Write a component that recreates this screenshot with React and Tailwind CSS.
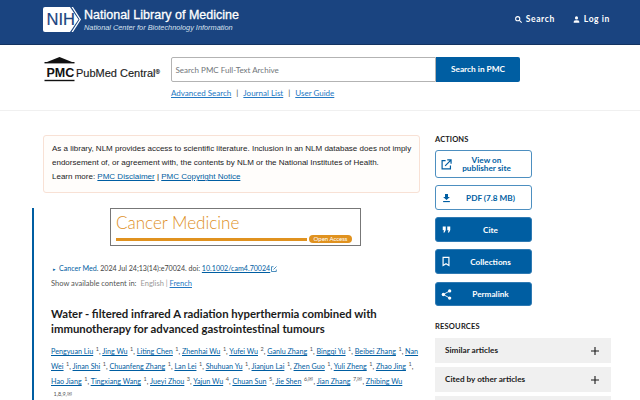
import React from "react";

const sans = "font-['Lato',sans-serif]";
const link = "text-[#005ea2] underline";

function Sup({ children }) {
  return <span className="inline-block whitespace-nowrap text-[5.500px] text-[#555] ml-[2.500px] align-[3px] leading-none">{children}</span>;
}

const authors = [
  ["Pengyuan Liu", "1"], ["Jing Wu", "1"], ["Liting Chen", "1"], ["Zhenhai Wu", "1"], ["Yufei Wu", "2"],
  ["Ganlu Zhang", "1"], ["Bingqi Yu", "1"], ["Beibei Zhang", "1"], ["Nan Wei", "1"], ["Jinan Shi", "1"],
  ["Chuanfeng Zhang", "1"], ["Lan Lei", "1"], ["Shuhuan Yu", "1"], ["Jianjun Lai", "1"], ["Zhen Guo", "1"],
  ["Yuli Zheng", "1"], ["Zhao Jing", "1"], ["Hao Jiang", "1"], ["Tingxiang Wang", "1"], ["Jueyi Zhou", "3"],
  ["Yajun Wu", "4"], ["Chuan Sun", "5"], ["Jie Shen", "6,✉"], ["Jian Zhang", "7,✉"], ["Zhibing Wu", "1,8,9,✉"],
];

function NihLogo() {
  return (
    <svg width="38" height="25" viewBox="0 0 38 25" className="shrink-0">
      <path d="M2 0H27L35.500 12.500L27 25H2Q0 25 0 23V2Q0 0 2 0Z" fill="#fff" />
      <path d="M30 0L38 12.500L30 25H28.500L36.500 12.500L28.500 0Z" fill="#fff" />
      <text x="3.500" y="18" fontFamily="Liberation Sans" fontSize="16.500" stroke="#1a4480" strokeWidth="0.200" fill="#1a4480">NIH</text>
    </svg>
  );
}

function PmcLogo() {
  return (
    <svg width="32" height="25" viewBox="0 0 32 25" className="shrink-0">
      <path d="M15.500 0L28 5H3Z" fill="#111" />
      <rect x="0.500" y="5" width="30" height="1.400" fill="#111" />
      <text x="2.500" y="20.300" fontFamily="Liberation Sans" fontWeight="700" fontSize="12.500" fill="#111">PMC</text>
      <rect x="0.500" y="22.800" width="30" height="1.400" fill="#111" />
    </svg>
  );
}

function Icon({ kind, color }) {
  const p = { fill: color };
  if (kind === "ext")
    return (
      <svg width="11" height="11" viewBox="0 0 12 12" fill="none" stroke={color} strokeWidth="1.300">
        <path d="M5 1.700H1.200V10.800H10.300V7" />
        <path d="M4.500 7.500L10.500 1.500M6.800 1H11V5.200" />
      </svg>
    );
  if (kind === "dl")
    return (
      <svg width="9" height="10" viewBox="0 0 12 12" {...p}>
        <path d="M4 0.500H8V4.500H10.500L6 8.700L1.500 4.500H4Z" />
        <rect x="1.500" y="10" width="9" height="1.500" />
      </svg>
    );
  if (kind === "cite")
    return (
      <svg width="9" height="9" viewBox="0 0 12 12" {...p}>
        <path d="M1 2H5V6.500L3.400 10H1.800L2.800 7H1ZM7 2H11V6.500L9.400 10H7.800L8.800 7H7Z" />
      </svg>
    );
  if (kind === "book")
    return (
      <svg width="10" height="11" viewBox="0 0 12 12" fill="none" stroke={color} strokeWidth="1.400">
        <path d="M2.500 1H9.500V10.800L6 8.600L2.500 10.800Z" />
      </svg>
    );
  return (
    <svg width="11" height="11" viewBox="0 0 14 14" {...p}>
      <circle cx="11" cy="2.500" r="2.100" />
      <circle cx="3" cy="7" r="2.100" />
      <circle cx="11" cy="11.500" r="2.100" />
      <path d="M3 7L11 2.500M3 7L11 11.500" stroke={color} strokeWidth="1.100" />
    </svg>
  );
}

function Action({ icon, children, solid, h, mb = "mb-[7px]", pr = "pr-[4px]" }) {
  return (
    <div
      className={`${h} ${mb} w-[97px] flex items-center pl-[2px] rounded-[3px] border-[1.500px] ${
        solid ? "bg-[#005ea2] text-white border-[#2f7ab3]" : "bg-white text-[#005ea2] border-[#4d8fc0]"
      }`}
    >
      <span className="w-[16px] flex justify-center shrink-0">
        <Icon kind={icon} color={solid ? "#fff" : "#005ea2"} />
      </span>
      <span className={`flex-1 text-center text-[8.200px] leading-[8px] font-bold ${pr}`}>{children}</span>
    </div>
  );
}

function Res({ children }) {
  return (
    <div className="h-[25px] mb-[4px] bg-[#f0f0f0] flex items-center justify-between pl-[10px] pr-[12px] text-[8.200px] font-bold text-[#1b1b1b] shrink-0">
      <span>{children}</span>
      <svg width="8" height="8" viewBox="0 0 8 8" stroke="#1b1b1b" strokeWidth="1.100">
        <path d="M4 0V8M0 4H8" />
      </svg>
    </div>
  );
}

export default function App() {
  return (
    <div className={`w-[640px] h-[400px] overflow-hidden bg-white ${sans}`}>
      <header className="h-[45px] bg-[#1a4480] border-b border-[#133361] pl-[43px] pr-[30px] flex items-center justify-between">
        <div className="flex items-center gap-[3px] -mt-[5px]">
          <NihLogo />
          <div className="text-white font-['Liberation_Sans',sans-serif]">
            <div className="text-[12.500px] leading-[15px] [-webkit-text-stroke:0.3px_white]">National Library of Medicine</div>
            <div className="text-[7.350px] leading-[9px] italic text-[#d7e1ee]">National Center for Biotechnology Information</div>
          </div>
        </div>
        <div className="flex items-center gap-[18px] text-white text-[8.500px] font-bold tracking-[0.6px] -mt-[5px]">
          <div className="flex items-center gap-[4px]">
            <svg width="7" height="7" viewBox="0 0 8 8" fill="none" stroke="#fff" strokeWidth="1.200">
              <circle cx="3.100" cy="3.100" r="2.400" />
              <path d="M5 5L7.600 7.600" />
            </svg>
            Search
          </div>
          <div className="flex items-center gap-[4px]">
            <svg width="7" height="7" viewBox="0 0 8 8" fill="#fff">
              <circle cx="4" cy="2.200" r="1.800" />
              <path d="M0.800 7.600V6.500Q0.800 4.900 4 4.900T7.200 6.500V7.600Z" />
            </svg>
            Log in
          </div>
        </div>
      </header>

      <section className="h-[66px] border-b border-[#f0f0f0] pl-[44px] flex">
        <div className="flex items-start pt-[12px] w-[127px] shrink-0">
          <PmcLogo />
          <span className="mt-[9px] text-[11px] leading-[14px] text-[#1b1b1b] font-['Liberation_Sans',sans-serif] whitespace-nowrap [-webkit-text-stroke:0.15px_#1b1b1b]">
            PubMed Central<span className="text-[6px] align-[3px] leading-none">®</span>
          </span>
        </div>
        <div className="pt-[12px]">
          <div className="flex w-[349px] h-[25px]">
            <div className="w-[265px] border border-[#b3b3b3] rounded-l-[2px] flex items-center pl-[3.500px] text-[8px] text-[#71767a]">
              Search PMC Full-Text Archive
            </div>
            <div className="flex-1 bg-[#005ea2] rounded-r-[2px] text-white text-[8.300px] font-bold flex items-center justify-center">
              Search in PMC
            </div>
          </div>
          <div className="mt-[5px] text-[8px] leading-[12px] text-[#444]">
            <span className="text-[#2378c3] underline">Advanced Search</span>
            <span className="mx-[5px]">|</span>
            <span className="text-[#2378c3] underline">Journal List</span>
            <span className="mx-[5px]">|</span>
            <span className="text-[#2378c3] underline">User Guide</span>
          </div>
        </div>
      </section>

      <main className="flex pt-[24px] pl-[32px]">
        <div className="w-[388px] shrink-0">
          <div className="ml-[11px] w-[377px] h-[58px] border border-[#f8e1d5] rounded-[3px] bg-[#fffdfb] pl-[8px] pr-[4px] pt-[6px] text-[8px] leading-[14px] text-[#1b1b1b] font-['Liberation_Sans',sans-serif]">
            <div className="whitespace-nowrap">As a library, NLM provides access to scientific literature. Inclusion in an NLM database does not imply</div>
            <div className="whitespace-nowrap">endorsement of, or agreement with, the contents by NLM or the National Institutes of Health.</div>
            <div className="whitespace-nowrap">
              Learn more: <span className={link}>PMC Disclaimer</span> | <span className={link}>PMC Copyright Notice</span>
            </div>
          </div>

          <article className="mt-[15px] border-l-2 border-[#005ea2] pl-[17px] h-[200px]">
            <div className="ml-[59px] w-[251px] h-[38px] border border-[#777] px-[5px] pt-[2px] text-[#de8f1e]">
              <div className="text-[17px] leading-[23px] font-light">Cancer Medicine</div>
              <div className="flex items-center mt-[1px]">
                <div className="h-[3px] w-[191px] bg-[#e0921f]" />
                <div className="ml-[2px] w-[43px] h-[8px] rounded-full bg-[#e0921f] text-white text-[6px] leading-[8px] text-center">Open Access</div>
              </div>
            </div>

            <div className="mt-[17px] text-[7.100px] leading-[12px] text-[#444] flex items-center whitespace-nowrap">
              <span className="text-[#005ea2] text-[5px] ml-[2px] mr-[3px]">▸</span>
              <span className="text-[#005ea2]">Cancer Med</span>. 2024 Jul 24;13(14):e70024. doi:&nbsp;
              <span className="text-[#005ea2] underline">10.1002/cam4.70024</span>
              <svg width="6" height="6" viewBox="0 0 6 6" fill="none" stroke="#005ea2" strokeWidth="0.700" className="ml-[1px]">
                <path d="M2.500 0.700H0.500V5.500H5.300V3.500M2.500 3.500L5.500 0.500" />
              </svg>
            </div>
            <div className="mt-[3px] text-[7.500px] leading-[12px] text-[#555]">
              Show available content in:
              <span className="text-[#999] ml-[4px]">English</span>
              <span className="text-[#999]"> | </span>
              <span className="text-[#2378c3] underline">French</span>
            </div>

            <h1 className="mt-[16px] text-[11.350px] leading-[15px] font-bold text-[#1b1b1b]">
              Water ‐ filtered infrared A radiation hyperthermia combined with immunotherapy for advanced gastrointestinal tumours
            </h1>

            <div className="mt-[8px] w-[371px] text-[7.200px] leading-[15px] text-[#444]">
              {authors.map(([n, s], i) => (
                <span key={n}>
                  <span className={link}>{n}</span>
                  <wbr />
                  <Sup>{s}</Sup>
                  {i < authors.length - 1 ? ", " : ""}
                </span>
              ))}
            </div>
          </article>
        </div>

        <aside className="ml-[15px] w-[176px] shrink-0 flex flex-col">
          <div className="text-[7.500px] leading-[10px] font-bold text-[#1b1b1b] tracking-[0.1px] mb-[5px]">ACTIONS</div>
          <Action icon="ext" h="h-[28px]" pr="pr-[12px]">View on<br />publisher site</Action>
          <Action icon="dl" h="h-[25px]">PDF (7.8 MB)</Action>
          <Action icon="cite" h="h-[25px]" solid>Cite</Action>
          <Action icon="book" h="h-[25px]" mb="mb-[8px]" solid>Collections</Action>
          <Action icon="share" h="h-[24px]" mb="mb-0" solid>Permalink</Action>
          <div className="mt-[16px] text-[7.500px] leading-[10px] font-bold text-[#1b1b1b] tracking-[0.2px] mb-[6px]">RESOURCES</div>
          <Res>Similar articles</Res>
          <Res>Cited by other articles</Res>
          <Res>Links to NCBI Databases</Res>
        </aside>
      </main>
    </div>
  );
}
